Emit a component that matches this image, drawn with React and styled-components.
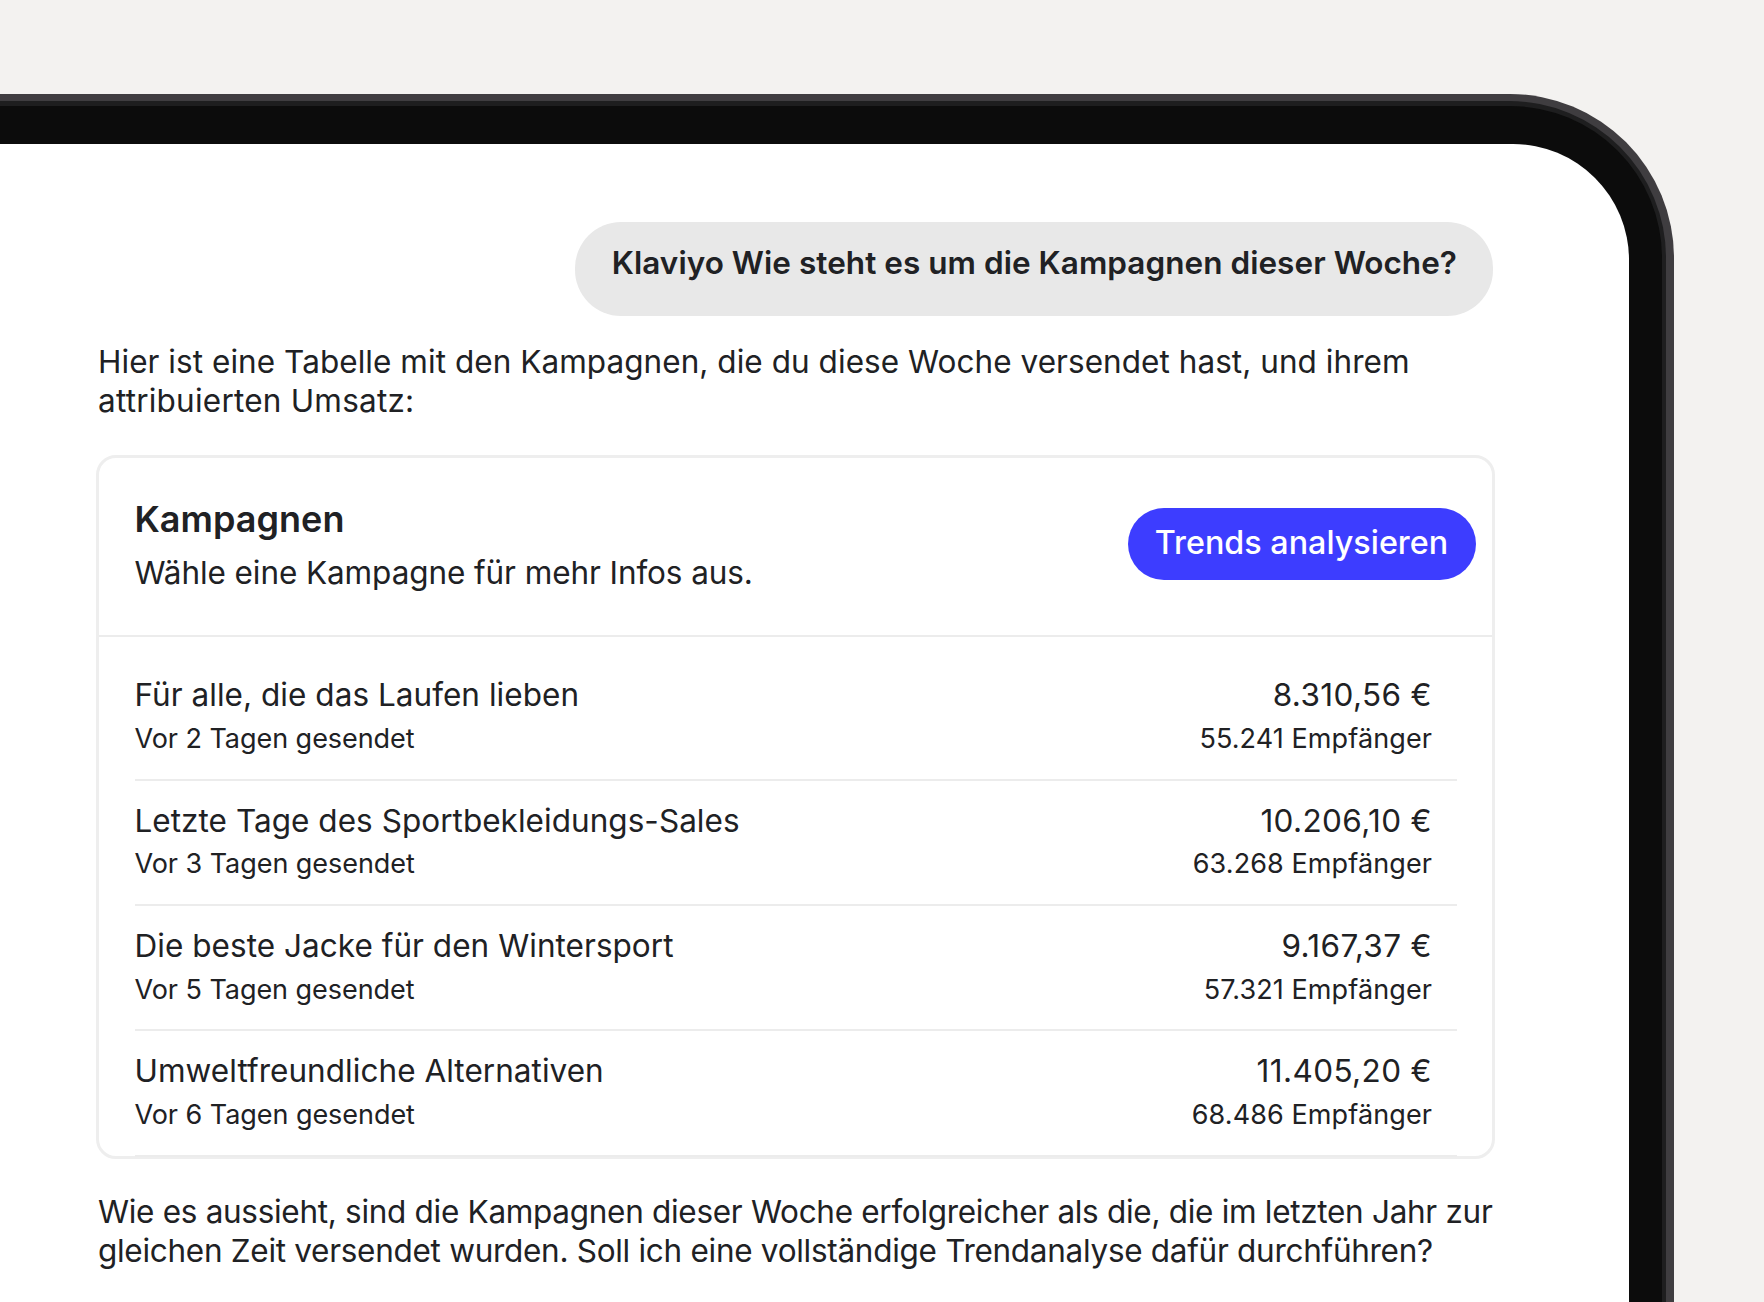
import React from 'react'
import styled, { createGlobalStyle } from 'styled-components'

const GlobalStyle = createGlobalStyle`
  html, body {
    margin: 0;
    height: 1302px;
    overflow: hidden;
    background: #f3f2f0;
  }
  * { box-sizing: border-box; }
`

const Page = styled.div`
  height: 1302px;
  padding-top: 94px;
  overflow: hidden;
  font-family: 'Inter', 'Liberation Sans', sans-serif;
  color: #202124;
`

const BezelRim = styled.div`
  width: 1674px;
  height: 1300px;
  padding: 7px 8px 0 0;
  background: #3f3d40;
  border-top-right-radius: 164px;
`

const BezelEdge = styled.div`
  height: 100%;
  padding: 5px 4px 0 0;
  background: #1e1e1f;
  border-top-right-radius: 157px;
`

const BezelBody = styled.div`
  height: 100%;
  padding: 38px 33px 0 0;
  background: #0c0c0c;
  border-top-right-radius: 152px;
`

const Screen = styled.div`
  height: 100%;
  padding: 78px 136px 0 98px;
  display: flex;
  flex-direction: column;
  background: #fff;
  border-top-right-radius: 116px;
`

const Bubble = styled.div`
  align-self: flex-end;
  height: 93.5px;
  padding: 20.5px 36px 0 37px;
  border-radius: 46px;
  background: #e8e8e8;
  font-size: 31.5px;
  font-weight: 600;
  line-height: 39.4px;
  letter-spacing: 0.04px;
`

const Paragraph = styled.p`
  margin: ${p => p.$top}px 0 0;
  font-size: 31.5px;
  line-height: 39.4px;
  white-space: pre;
`

const Line = styled.span`
  display: block;
  letter-spacing: ${p => p.$tracking}px;
`

const Card = styled.section`
  margin: 34.6px 0 0 -2px;
  width: 1398.5px;
  border: 3px solid #eeeeee;
  border-radius: 20px;
`

const CardHeader = styled.header`
  height: 179.25px;
  padding: 0 16px 0 35.5px;
  display: flex;
  align-items: center;
  justify-content: space-between;
  border-bottom: 2.5px solid #ececec;
`

const HeaderText = styled.div`
  margin-top: -1px;
`

const CardTitle = styled.h2`
  margin: 0 0 13px;
  font-size: 36px;
  font-weight: 600;
  line-height: 39.4px;
  letter-spacing: 0.02px;
`

const CardSubtitle = styled.div`
  font-size: 31.5px;
  line-height: 39.4px;
  letter-spacing: -0.09px;
`

const Button = styled.button`
  width: 348px;
  height: 72px;
  padding: 0 0 4px;
  margin-top: -4.5px;
  border: none;
  border-radius: 36px;
  background: #3d3dff;
  color: #fff;
  font-family: inherit;
  font-size: 32.3px;
  font-weight: 550;
  white-space: nowrap;
`

const RowList = styled.div`
  margin: 18px 0 -1px 35.5px;
  width: 1322px;
`

const Row = styled.div`
  display: flex;
  justify-content: space-between;
  height: 125.4px;
  padding: 20px 24.5px 0 0;
  border-bottom: 2.5px solid #ececec;
`

const RowColumn = styled.div`
  display: flex;
  flex-direction: column;
  align-items: ${p => (p.$end ? 'flex-end' : 'flex-start')};
`

const RowTitle = styled.div`
  font-size: 31.5px;
  line-height: 39.4px;
  letter-spacing: ${p => (p.$price ? 0.38 : 0.04)}px;
`

const RowMeta = styled.div`
  margin-top: 6.2px;
  font-size: 27px;
  line-height: 36px;
  letter-spacing: ${p => (p.$count ? 0.1 : -0.05)}px;
`

const campaigns = [
  { name: 'Für alle, die das Laufen lieben', sent: 'Vor 2 Tagen gesendet', revenue: '8.310,56 €', recipients: '55.241 Empfänger' },
  { name: 'Letzte Tage des Sportbekleidungs-Sales', sent: 'Vor 3 Tagen gesendet', revenue: '10.206,10 €', recipients: '63.268 Empfänger' },
  { name: 'Die beste Jacke für den Wintersport', sent: 'Vor 5 Tagen gesendet', revenue: '9.167,37 €', recipients: '57.321 Empfänger' },
  { name: 'Umweltfreundliche Alternativen', sent: 'Vor 6 Tagen gesendet', revenue: '11.405,20 €', recipients: '68.486 Empfänger' }
]

export default function App() {
  return (
    <Page>
      <GlobalStyle />
      <BezelRim>
        <BezelEdge>
          <BezelBody>
            <Screen>
              <Bubble>Klaviyo Wie steht es um die Kampagnen dieser Woche?</Bubble>
              <Paragraph $top={26.1}>
                <Line $tracking={0.05}>Hier ist eine Tabelle mit den Kampagnen, die du diese Woche versendet hast, und ihrem</Line>
                <Line $tracking={0.22}>attribuierten Umsatz:</Line>
              </Paragraph>
              <Card>
                <CardHeader>
                  <HeaderText>
                    <CardTitle>Kampagnen</CardTitle>
                    <CardSubtitle>Wähle eine Kampagne für mehr Infos aus.</CardSubtitle>
                  </HeaderText>
                  <Button>Trends analysieren</Button>
                </CardHeader>
                <RowList>
                  {campaigns.map(c => (
                    <Row key={c.name}>
                      <RowColumn>
                        <RowTitle>{c.name}</RowTitle>
                        <RowMeta>{c.sent}</RowMeta>
                      </RowColumn>
                      <RowColumn $end>
                        <RowTitle $price>{c.revenue}</RowTitle>
                        <RowMeta $count>{c.recipients}</RowMeta>
                      </RowColumn>
                    </Row>
                  ))}
                </RowList>
              </Card>
              <Paragraph $top={33.2}>
                <Line $tracking={-0.3}>Wie es aussieht, sind die Kampagnen dieser Woche erfolgreicher als die, die im letzten Jahr zur</Line>
                <Line $tracking={-0.29}>gleichen Zeit versendet wurden. Soll ich eine vollständige Trendanalyse dafür durchführen?</Line>
              </Paragraph>
            </Screen>
          </BezelBody>
        </BezelEdge>
      </BezelRim>
    </Page>
  )
}
